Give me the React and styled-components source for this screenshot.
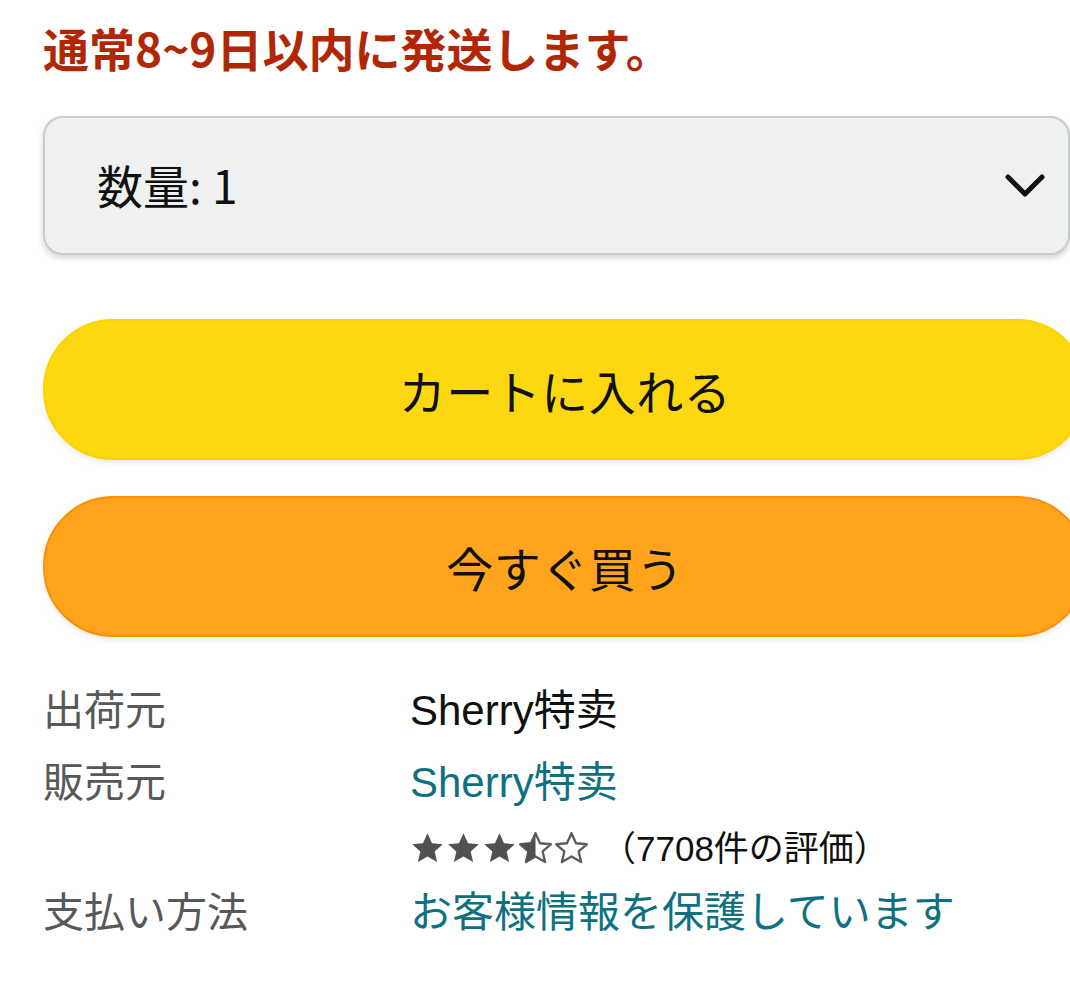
import React from "react";
import styled, { createGlobalStyle } from "styled-components";

const GlobalStyle = createGlobalStyle`
  html, body {
    margin: 0;
    padding: 0;
    background: #ffffff;
    overflow: hidden;
  }
  body {
    font-family: "Liberation Sans", "Noto Sans CJK JP", sans-serif;
    color: #0f1111;
  }
`;

const Page = styled.div`
  width: 1100px;
  padding: 16px 0 0 43px;
  box-sizing: border-box;
`;

const Delivery = styled.div`
  font-family: "Noto Sans CJK JP", sans-serif;
  font-size: 46px;
  font-weight: 700;
  line-height: 62px;
  color: #b12704;
`;

const QuantitySelect = styled.div`
  margin-top: 38px;
  width: 1027px;
  height: 139px;
  box-sizing: border-box;
  border: 2px solid #c9cccc;
  border-radius: 20px;
  background: #eff1f1;
  box-shadow: 0 3px 6px rgba(15, 17, 17, 0.18);
  display: flex;
  align-items: center;
  justify-content: space-between;
  padding: 0 22px 0 52px;
`;

const QuantityText = styled.span`
  font-family: "Noto Sans CJK JP", sans-serif;
  font-size: 46px;
  line-height: 1;
  color: #0f1111;
  margin-top: -4px;
`;

const Chevron = () => (
  <svg width="42" height="26" viewBox="0 0 42 26">
    <polyline
      points="4,4 21,21 38,4"
      fill="none"
      stroke="#0f1111"
      strokeWidth="5"
      strokeLinecap="round"
      strokeLinejoin="round"
    />
  </svg>
);

const Buttons = styled.div`
  margin-top: 64px;
  display: flex;
  flex-direction: column;
  gap: 36px;
`;

const PillButton = styled.button`
  width: 1044px;
  height: 141px;
  box-sizing: border-box;
  border-radius: 70px;
  border: 2px solid ${(props) => props.edge};
  background: ${(props) => props.fill};
  box-shadow: 0 3px 5px rgba(213, 217, 217, 0.5);
  font-family: "Noto Sans CJK JP", sans-serif;
  font-size: 47px;
  color: #0f1111;
  display: flex;
  align-items: center;
  justify-content: center;
  padding: 0;
  letter-spacing: 0.5px;
`;

const InfoTable = styled.div`
  margin-top: 38px;
  display: grid;
  grid-template-columns: 367px 1fr;
`;

const Label = styled.div`
  font-size: 41px;
  line-height: 72px;
  color: #565959;
`;

const Value = styled.div`
  font-size: 42px;
  line-height: 72px;
  color: ${(props) => (props.link ? "#0e7180" : "#0f1111")};
`;

const RatingRow = styled.div`
  display: flex;
  align-items: center;
  height: 58px;
  gap: 12px;
`;

const Stars = styled.div`
  display: flex;
  gap: 1px;
`;

const RatingCount = styled.span`
  font-size: 35px;
  color: #0f1111;
  line-height: 1;
`;

const STAR =
  "M12 1.5l3.1 6.9 7.4.7-5.6 4.9 1.7 7.3L12 17.5l-6.6 3.8 1.7-7.3L1.5 9.1l7.4-.7z";

const Star = ({ type }) => (
  <svg width="35" height="35" viewBox="0 0 24 24">
    <defs>
      <clipPath id="half">
        <rect x="0" y="0" width="12" height="24" />
      </clipPath>
    </defs>
    {type === "full" && <path d={STAR} fill="#4f5252" />}
    {type !== "full" && (
      <path
        d={STAR}
        fill="none"
        stroke="#5a5d5d"
        strokeWidth="1.6"
        strokeLinejoin="round"
      />
    )}
    {type === "half" && <path d={STAR} fill="#4f5252" clipPath="url(#half)" />}
  </svg>
);

export default function App() {
  return (
    <>
      <GlobalStyle />
      <Page>
        <Delivery>通常8~9日以内に発送します。</Delivery>
        <QuantitySelect>
          <QuantityText>数量: 1</QuantityText>
          <Chevron />
        </QuantitySelect>
        <Buttons>
          <PillButton fill="#fdd811" edge="#fcd200">
            カートに入れる
          </PillButton>
          <PillButton fill="#ffa41c" edge="#ff8f00">
            今すぐ買う
          </PillButton>
        </Buttons>
        <InfoTable>
          <Label>出荷元</Label>
          <Value>Sherry特卖</Value>
          <Label>販売元</Label>
          <Value link>Sherry特卖</Value>
          <div />
          <RatingRow>
            <Stars>
              <Star type="full" />
              <Star type="full" />
              <Star type="full" />
              <Star type="half" />
              <Star type="empty" />
            </Stars>
            <RatingCount>（7708件の評価）</RatingCount>
          </RatingRow>
          <Label>支払い方法</Label>
          <Value link>お客様情報を保護しています</Value>
        </InfoTable>
      </Page>
    </>
  );
}
